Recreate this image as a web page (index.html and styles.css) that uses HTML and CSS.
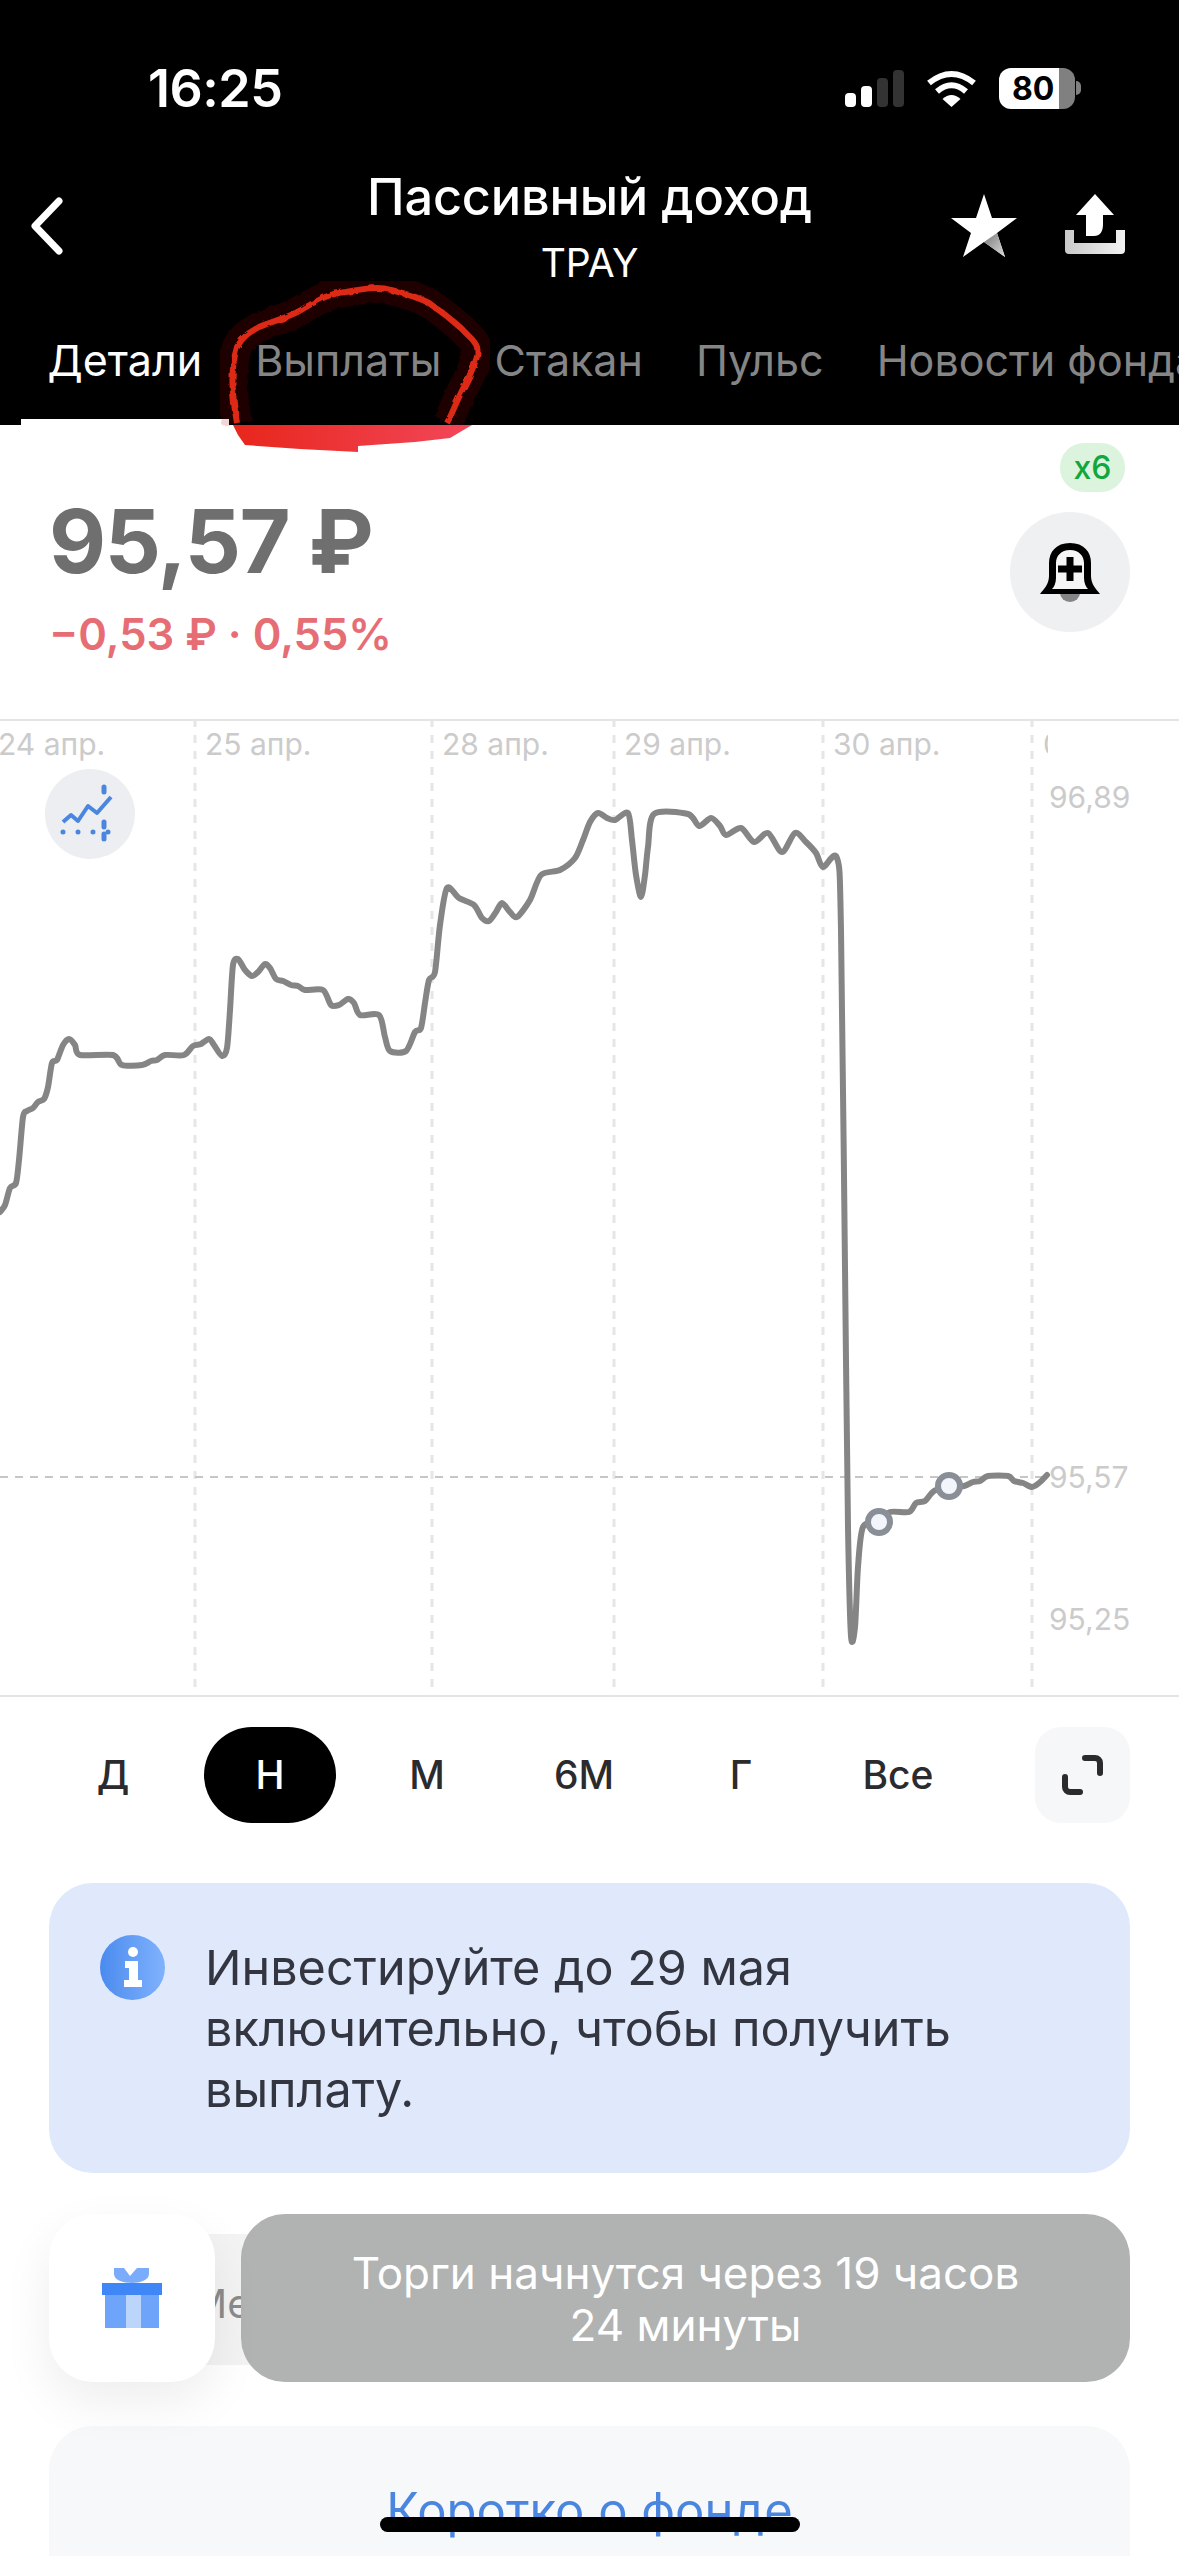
FILE: index.html
```html
<!DOCTYPE html>
<html lang="ru">
<head>
  <meta charset="UTF-8" />
  <meta name="viewport" content="width=device-width, initial-scale=1.0"/>
  <title>Пассивный доход</title>
  <link rel="stylesheet" href="styles.css">
</head>
<body>
  <div class="screen">

    <!-- Header -->
    <header class="topbar">
      <div class="status">
        <span class="time">16:25</span>
        <div class="status-icons">
          <div class="signal">
            <i class="bar bar-1"></i><i class="bar bar-2"></i><i class="bar bar-3"></i><i class="bar bar-4"></i>
          </div>
          <svg class="wifi" width="51" height="37" viewBox="0 0 51 37">
            <path d="M3 13Q25.5 -5 48 13" fill="none" stroke="#fff" stroke-width="6"/>
            <path d="M11 21.500Q25.500 9 40 21.500" fill="none" stroke="#fff" stroke-width="6"/>
            <path d="M16.500 29Q25.500 21 34.500 29L25.500 37Z" fill="#fff"/>
          </svg>
          <div class="battery"><span class="battery-level">80</span></div>
          <i class="battery-nub"></i>
        </div>
      </div>

      <div class="nav">
        <svg class="back" width="33" height="58" viewBox="0 0 33 58">
          <path d="M29 4L5 29L29 54" fill="none" stroke="#fff" stroke-width="7" stroke-linecap="round" stroke-linejoin="round"/>
        </svg>
        <div class="nav-title">
          <h1>Пассивный доход</h1>
          <div class="ticker">TPAY</div>
        </div>
        <div class="nav-actions">
          <svg width="66" height="63" viewBox="0 0 66 63">
            <defs>
              <linearGradient id="starShade" x1="0" y1="0" x2="1" y2="1">
                <stop offset="0" stop-color="#777"/><stop offset="1" stop-color="#ddd"/>
              </linearGradient>
            </defs>
            <path d="M33 0L41 24H66L46 39L54 63L33 48L12 63L20 39L0 24H25Z" fill="#fff"/>
            <path d="M46 39L54 63L33 48Z" fill="url(#starShade)"/>
          </svg>
          <svg width="60" height="60" viewBox="0 0 60 60">
            <defs>
              <linearGradient id="trayShade" x1="0" y1="0" x2="1" y2="0">
                <stop offset="0" stop-color="#c9c9c9"/><stop offset="1" stop-color="#f2f2f2"/>
              </linearGradient>
            </defs>
            <path d="M0 36H9V49H51V36H60V56Q60 60 56 60H4Q0 60 0 56Z" fill="url(#trayShade)"/>
            <path d="M30 0L49 21H38V30Q38 42 29 42H21V21H11Z" fill="#fff"/>
          </svg>
        </div>
      </div>

      <nav class="tabs">
        <a class="tab tab-active">Детали</a>
        <a class="tab">Выплаты</a>
        <a class="tab">Стакан</a>
        <a class="tab">Пульс</a>
        <a class="tab">Новости фонда</a>
      </nav>
    </header>

    <!-- Price -->
    <section class="quote">
      <div>
        <div class="price">95,57 ₽</div>
        <div class="change">−0,53 ₽ · 0,55%</div>
      </div>
      <div class="alerts">
        <span class="alerts-badge">x6</span>
        <button class="alerts-btn">
          <svg width="60" height="60" viewBox="0 0 60 60">
            <path d="M20 50H40V51A10 9 0 0 1 20 51Z" fill="#858585"/>
            <path d="M30 1C16 1 9 10 9 21V34C9 42 4 47 0 52H60C56 47 51 42 51 34V21C51 10 44 1 30 1Z" fill="#000"/>
            <path d="M30 8C21 8 16 14 16 21V36C16 41 14 45 12 47H48C46 45 44 41 44 36V21C44 14 39 8 30 8Z" fill="#f6f6f7"/>
            <path d="M26.500 16H33.500V24.500H42V31.500H33.500V40H26.500V31.500H18V24.500H26.500Z" transform="translate(0 -1)" fill="#000"/>
          </svg>
        </button>
      </div>
    </section>

    <!-- Chart -->
    <section class="chart">
      <svg class="chart-canvas" width="1179" height="978" viewBox="0 719 1179 978">
        <defs>
          <clipPath id="edgeLabel"><rect x="1043" y="725" width="5" height="40"/></clipPath>
        </defs>
        <g class="grid-lines">
          <line x1="195" y1="719" x2="195" y2="1696"/>
          <line x1="432" y1="719" x2="432" y2="1696"/>
          <line x1="614" y1="719" x2="614" y2="1696"/>
          <line x1="823" y1="719" x2="823" y2="1696"/>
          <line x1="1032" y1="719" x2="1032" y2="1696"/>
        </g>
        <line class="last-price" x1="0" y1="1477" x2="1047" y2="1477"/>
        <g class="chart-label">
          <text x="-2" y="755">24 апр.</text>
          <text x="205" y="755">25 апр.</text>
          <text x="442" y="755">28 апр.</text>
          <text x="624" y="755">29 апр.</text>
          <text x="833" y="755">30 апр.</text>
          <text x="1043" y="755" clip-path="url(#edgeLabel)">01</text>
          <text x="1049" y="808">96,89</text>
          <text x="1049" y="1488">95,57</text>
          <text x="1049" y="1630">95,25</text>
        </g>
        <path id="priceLine" class="price-line"/>
        <circle class="marker" cx="879" cy="1522" r="11"/>
        <circle class="marker" cx="949" cy="1486" r="11"/>
      </svg>
      <button class="indicators">
        <svg width="60" height="60" viewBox="0 0 60 60">
          <path d="M3 38L11 31L18 37L28 22L37 29L51 13" fill="none" stroke="#4a86e0" stroke-width="4" stroke-linejoin="round"/>
          <path d="M3 48H53" stroke="#4a86e0" stroke-width="5" stroke-linecap="round" stroke-dasharray="0 15" fill="none"/>
          <path d="M44 3V10M44 38V58" stroke="#4a86e0" stroke-width="5" stroke-linecap="round" stroke-dasharray="5 7" fill="none"/>
        </svg>
      </button>
    </section>

    <!-- Period switch -->
    <div class="periods">
      <span class="period">Д</span>
      <span class="period period-active">Н</span>
      <span class="period">М</span>
      <span class="period">6М</span>
      <span class="period">Г</span>
      <span class="period">Все</span>
      <button class="expand">
        <svg width="41" height="40" viewBox="0 0 41 40">
          <path d="M23 3H33A5 5 0 0 1 38 8V18M3 22V32A5 5 0 0 0 8 37H18" fill="none" stroke="#2b2b2e" stroke-width="6" stroke-linecap="round"/>
        </svg>
      </button>
    </div>

    <!-- Notice -->
    <div class="notice">
      <svg class="notice-icon" width="65" height="65" viewBox="0 0 65 65">
        <defs>
          <linearGradient id="infoFill" x1="0" y1="0" x2="1" y2="0">
            <stop offset="0" stop-color="#4b8bee"/><stop offset="1" stop-color="#80b2fd"/>
          </linearGradient>
        </defs>
        <circle cx="32.500" cy="32.500" r="32.500" fill="url(#infoFill)"/>
        <circle cx="33" cy="17" r="5" fill="#fff"/>
        <path d="M25 26H38V45H42V52H24V45H29V33H25Z" fill="#fff"/>
      </svg>
      <p class="notice-text">Инвестируйте до 29 мая включительно, чтобы получить выплату.</p>
    </div>

    <!-- Gift row -->
    <div class="gift-row">
      <div class="gift-card">
        <svg width="60" height="60" viewBox="0 0 60 60">
          <path d="M12 0H22L28 8L35 0H47V6C47 12 38 15 30 15C21 15 12 12 12 6Z" fill="#7aacfb"/>
          <rect x="3" y="15" width="54" height="45" fill="#6ea5fb"/>
          <rect x="24" y="15" width="15" height="45" fill="#bcd6fb"/>
          <rect x="0" y="15" width="60" height="12" fill="#3f86f7"/>
        </svg>
      </div>
      <div class="gift-chip">Ме</div>
    </div>

    <!-- About -->
    <section class="about">
      <a class="about-link">Коротко о фонде</a>
    </section>

    <!-- Overlays -->
    <div class="toast">Торги начнутся через 19 часов<br>24 минуты</div>
    <div class="home-bar"></div>
    <svg class="scribble" width="1179" height="2556" viewBox="0 0 1179 2556">
      <defs>
        <linearGradient id="smearFill" x1="0" y1="0" x2="1" y2="0">
          <stop offset="0" stop-color="#e8261c"/><stop offset="1" stop-color="#f2475a"/>
        </linearGradient>
        <filter id="rough" x="-5%" y="-5%" width="110%" height="110%">
          <feTurbulence type="fractalNoise" baseFrequency="0.12" numOctaves="2" seed="4"/>
          <feDisplacementMap in="SourceGraphic" scale="4"/>
        </filter>
      </defs>
      <g filter="url(#rough)">
        <path class="scribble-glow" d="M237 423C232 395 230 370 237 347C243 336 250 332 259 327C275 320 288 318 301 310C318 300 330 293 346 292C362 289 378 286 391 290C407 294 418 297 429 303C442 312 452 320 461 328C468 336 475 340 477 347C479 356 475 362 472 370C468 380 463 388 459 397C454 408 451 416 447 423"/>
        <path class="scribble-line" d="M237 423C232 395 230 370 237 347C243 336 250 332 259 327C275 320 288 318 301 310C318 300 330 293 346 292C362 289 378 286 391 290C407 294 418 297 429 303C442 312 452 320 461 328C468 336 475 340 477 347C479 356 475 362 472 370C468 380 463 388 459 397C454 408 451 416 447 423"/>
      </g>
      <path d="M233 425H472L450 438L415 442L358 446V452L300 449L245 445L238 435Z" fill="url(#smearFill)"/>
    </svg>
  </div>

  <script src="chart.js"></script>
</body>
</html>
```

FILE: styles.css
```css
/* —— Reset & Base —— */
* { box-sizing: border-box; margin: 0; padding: 0; }
body { font-family: Inter, "Liberation Sans", sans-serif; background: #fff; color: #2b2b2e; }
button { border: none; display: flex; align-items: center; justify-content: center; }
svg { display: block; }

.screen { position: relative; width: 1179px; height: 2556px; overflow: hidden; background: #fff; }

/* —— Header —— */
.topbar { height: 425px; background: #000; color: #fff; overflow: hidden; }

.status { display: flex; justify-content: space-between; align-items: center; height: 176px; padding: 0 98px 0 148px; }
.time { font-size: 52px; font-weight: 600; letter-spacing: -0.5px; }
.status-icons { display: flex; align-items: center; }
.signal { display: flex; align-items: flex-end; gap: 5px; height: 37px; margin-right: 22px; }
.bar { width: 11px; border-radius: 4px; background: #fff; }
.bar-1 { height: 14px; }
.bar-2 { height: 21px; }
.bar-3 { height: 29px; background: #333; }
.bar-4 { height: 37px; background: #333; }
.wifi { margin-right: 22px; }
.battery { width: 76px; height: 41px; border-radius: 12px; background: linear-gradient(to right, #fff 79%, #808080 79%); }
.battery-level { display: block; padding-left: 13px; font-size: 32px; font-weight: 700; line-height: 41px; color: #000; }
.battery-nub { width: 5px; height: 14px; margin-left: 1px; border-radius: 0 6px 6px 0; background: #808080; }

.nav { position: relative; display: flex; justify-content: center; height: 154px; margin-top: -9px; }
.back { position: absolute; left: 30px; top: 30px; }
.nav-title { text-align: center; }
.nav-title h1 { font-size: 50.500px; font-weight: 500; line-height: 60px; letter-spacing: -0.2px; }
.ticker { margin-top: 13px; font-size: 39px; line-height: 46px; }
.nav-actions { position: absolute; right: 54px; top: 27px; display: flex; gap: 48px; }

.tabs { display: flex; padding: 0 0 0 21px; white-space: nowrap; }
.tab { padding: 13px 26.500px 33px; font-size: 43px; line-height: 52px; color: #858585; border-bottom: 6px solid transparent; }
.tab-active { color: #fff; border-bottom-color: #fff; }

/* —— Price —— */
.quote { display: flex; justify-content: space-between; height: 294px; padding: 62px 49px 0 49px; }
.price { font-size: 88px; font-weight: 700; line-height: 108px; color: #6f6f6f; letter-spacing: -1.500px; }
.change { margin-top: 12px; font-size: 43.500px; font-weight: 600; line-height: 54px; color: #e76d74; }
.alerts { display: flex; flex-direction: column; align-items: flex-end; margin-top: -44px; }
.alerts-badge { width: 65px; height: 49px; margin-right: 5px; border-radius: 24px; background: #dcf4de; color: #12a73c; font-size: 32px; font-weight: 500; line-height: 49px; text-align: center; }
.alerts-btn { width: 120px; height: 120px; margin-top: 20px; border-radius: 50%; background: #eef0f2; }

/* —— Chart —— */
.chart { position: relative; height: 978px; border-top: 2px solid #e4e4e4; border-bottom: 2px solid #e4e4e4; }
.chart-canvas { position: absolute; left: 0; top: -2px; }
.grid-lines line { stroke: #e6e6e6; stroke-width: 3; stroke-dasharray: 8 8; }
.last-price { stroke: #c6c6c6; stroke-width: 2; stroke-dasharray: 8 7; }
.chart-label text { font-size: 30px; fill: #cbcbcb; }
.price-line { fill: none; stroke: #858585; stroke-width: 6; stroke-linejoin: round; stroke-linecap: round; }
.marker { fill: #f2f6fc; stroke: #8a8e96; stroke-width: 6; }
.indicators { position: absolute; left: 45px; top: 48px; width: 90px; height: 90px; border-radius: 50%; background: #eceef1; }

/* —— Period Switch —— */
.periods { display: flex; align-items: center; gap: 25px; height: 96px; margin: 30px 49px 0 47px; }
.period { width: 132px; height: 96px; border-radius: 48px; font-size: 39px; font-weight: 500; line-height: 96px; text-align: center; }
.period-active { background: #000; color: #fff; }
.expand { width: 95px; height: 96px; margin-left: auto; border-radius: 26px; background: #f6f7f8; }

/* —— Notice —— */
.notice { display: flex; gap: 40px; height: 290px; margin: 60px 49px 0; padding: 54px 51px 0; border-radius: 44px; background: #dfe9fb; }
.notice-icon { flex: none; margin-top: -2px; }
.notice-text { width: 800px; font-size: 48.500px; line-height: 61px; color: #333640; }

/* —— Gift Row —— */
.gift-row { display: flex; align-items: center; height: 168px; margin: 41px 49px 0; }
.gift-card { position: relative; z-index: 1; display: flex; align-items: center; justify-content: center; flex: none; width: 166px; height: 168px; border-radius: 44px; background: #fff; box-shadow: 0 20px 50px rgba(0,0,0,0.07); }
.gift-chip { width: 300px; height: 131px; margin-top: 3px; margin-left: -32px; padding-left: 8px; border-radius: 0 24px 24px 0; background: #f3f3f4; color: #8b8b8b; font-size: 40px; line-height: 139px; }

/* —— About —— */
.about { height: 300px; margin: 44px 49px 0; padding-top: 54px; border-radius: 44px; background: #f7f8f9; text-align: center; }
.about-link { font-size: 49px; line-height: 62px; color: #4a86e0; }

/* —— Overlays —— */
.toast { position: absolute; left: 241px; top: 2214px; width: 889px; height: 168px; padding-top: 33px; border-radius: 44px; background: #b1b2b2; color: #fff; font-size: 44px; line-height: 52px; text-align: center; }
.home-bar { position: absolute; left: 380px; top: 2517px; width: 420px; height: 15px; border-radius: 8px; background: #000; }
.scribble { position: absolute; left: 0; top: 0; pointer-events: none; }
.scribble-glow { fill: none; stroke: rgba(190,0,0,0.16); stroke-width: 30; }
.scribble-line { fill: none; stroke: #dd2c16; stroke-width: 6; }
```

FILE: chart.js
```js
// —— Price line, in page coordinates (svg viewBox starts at y=719) ——
const points = [
  [0,1212],[5,1205],[10,1188],[16,1183],[19,1160],[23,1117],[27,1111],[33,1108],[38,1102],[44,1099],
  [48,1087],[52,1063],[57,1060],[63,1045],[69,1039],[75,1045],[80,1055],[113,1055],[122,1065],[142,1065],
  [151,1061],[157,1060],[165,1055],[184,1055],[193,1046],[201,1044],[209,1039],[214,1045],[222,1056],[227,1048],
  [230,1010],[233,965],[238,959],[245,970],[252,976],[258,972],[265,964],[270,968],[276,979],[283,981],
  [291,985],[298,986],[305,990],[323,990],[331,1005],[339,1005],[348,999],[354,1003],[360,1015],[379,1015],
  [385,1037],[390,1051],[406,1051],[415,1032],[421,1028],[425,1003],[429,980],[435,972],[440,925],[447,888],
  [459,898],[474,905],[482,918],[489,921],[496,912],[502,903],[510,912],[517,917],[530,900],[541,875],
  [560,870],[575,858],[583,840],[590,822],[598,813],[607,818],[615,820],[628,813],[632,840],[636,875],
  [641,897],[645,875],[648,847],[654,814],[688,814],[699,826],[711,818],[720,826],[726,835],[741,828],
  [754,842],[768,833],[782,852],[795,833],[806,842],[816,853],[823,867],[837,858],[841,930],[846,1360],
  [848,1527],[851,1636],[855,1627],[858,1567],[863,1527],[879,1522],[890,1512],[909,1512],[916,1503],[925,1501],
  [934,1491],[949,1486],[964,1486],[973,1482],[980,1481],[988,1476],[1008,1476],[1014,1481],[1023,1483],[1032,1487],
  [1039,1483],[1047,1475]
];

// catmull-rom to bezier, low tension so the steep parts don't overshoot
function smoothPath(pts) {
  const k = 0.14;
  let d = `M${pts[0][0]} ${pts[0][1]}`;
  for (let i = 0; i < pts.length - 1; i++) {
    const p0 = pts[i - 1] || pts[i];
    const p1 = pts[i];
    const p2 = pts[i + 1];
    const p3 = pts[i + 2] || p2;
    const c1x = p1[0] + (p2[0] - p0[0]) * k;
    const c1y = p1[1] + (p2[1] - p0[1]) * k;
    const c2x = p2[0] - (p3[0] - p1[0]) * k;
    const c2y = p2[1] - (p3[1] - p1[1]) * k;
    d += `C${c1x.toFixed(1)} ${c1y.toFixed(1)} ${c2x.toFixed(1)} ${c2y.toFixed(1)} ${p2[0]} ${p2[1]}`;
  }
  return d;
}

document.getElementById('priceLine').setAttribute('d', smoothPath(points));
```
